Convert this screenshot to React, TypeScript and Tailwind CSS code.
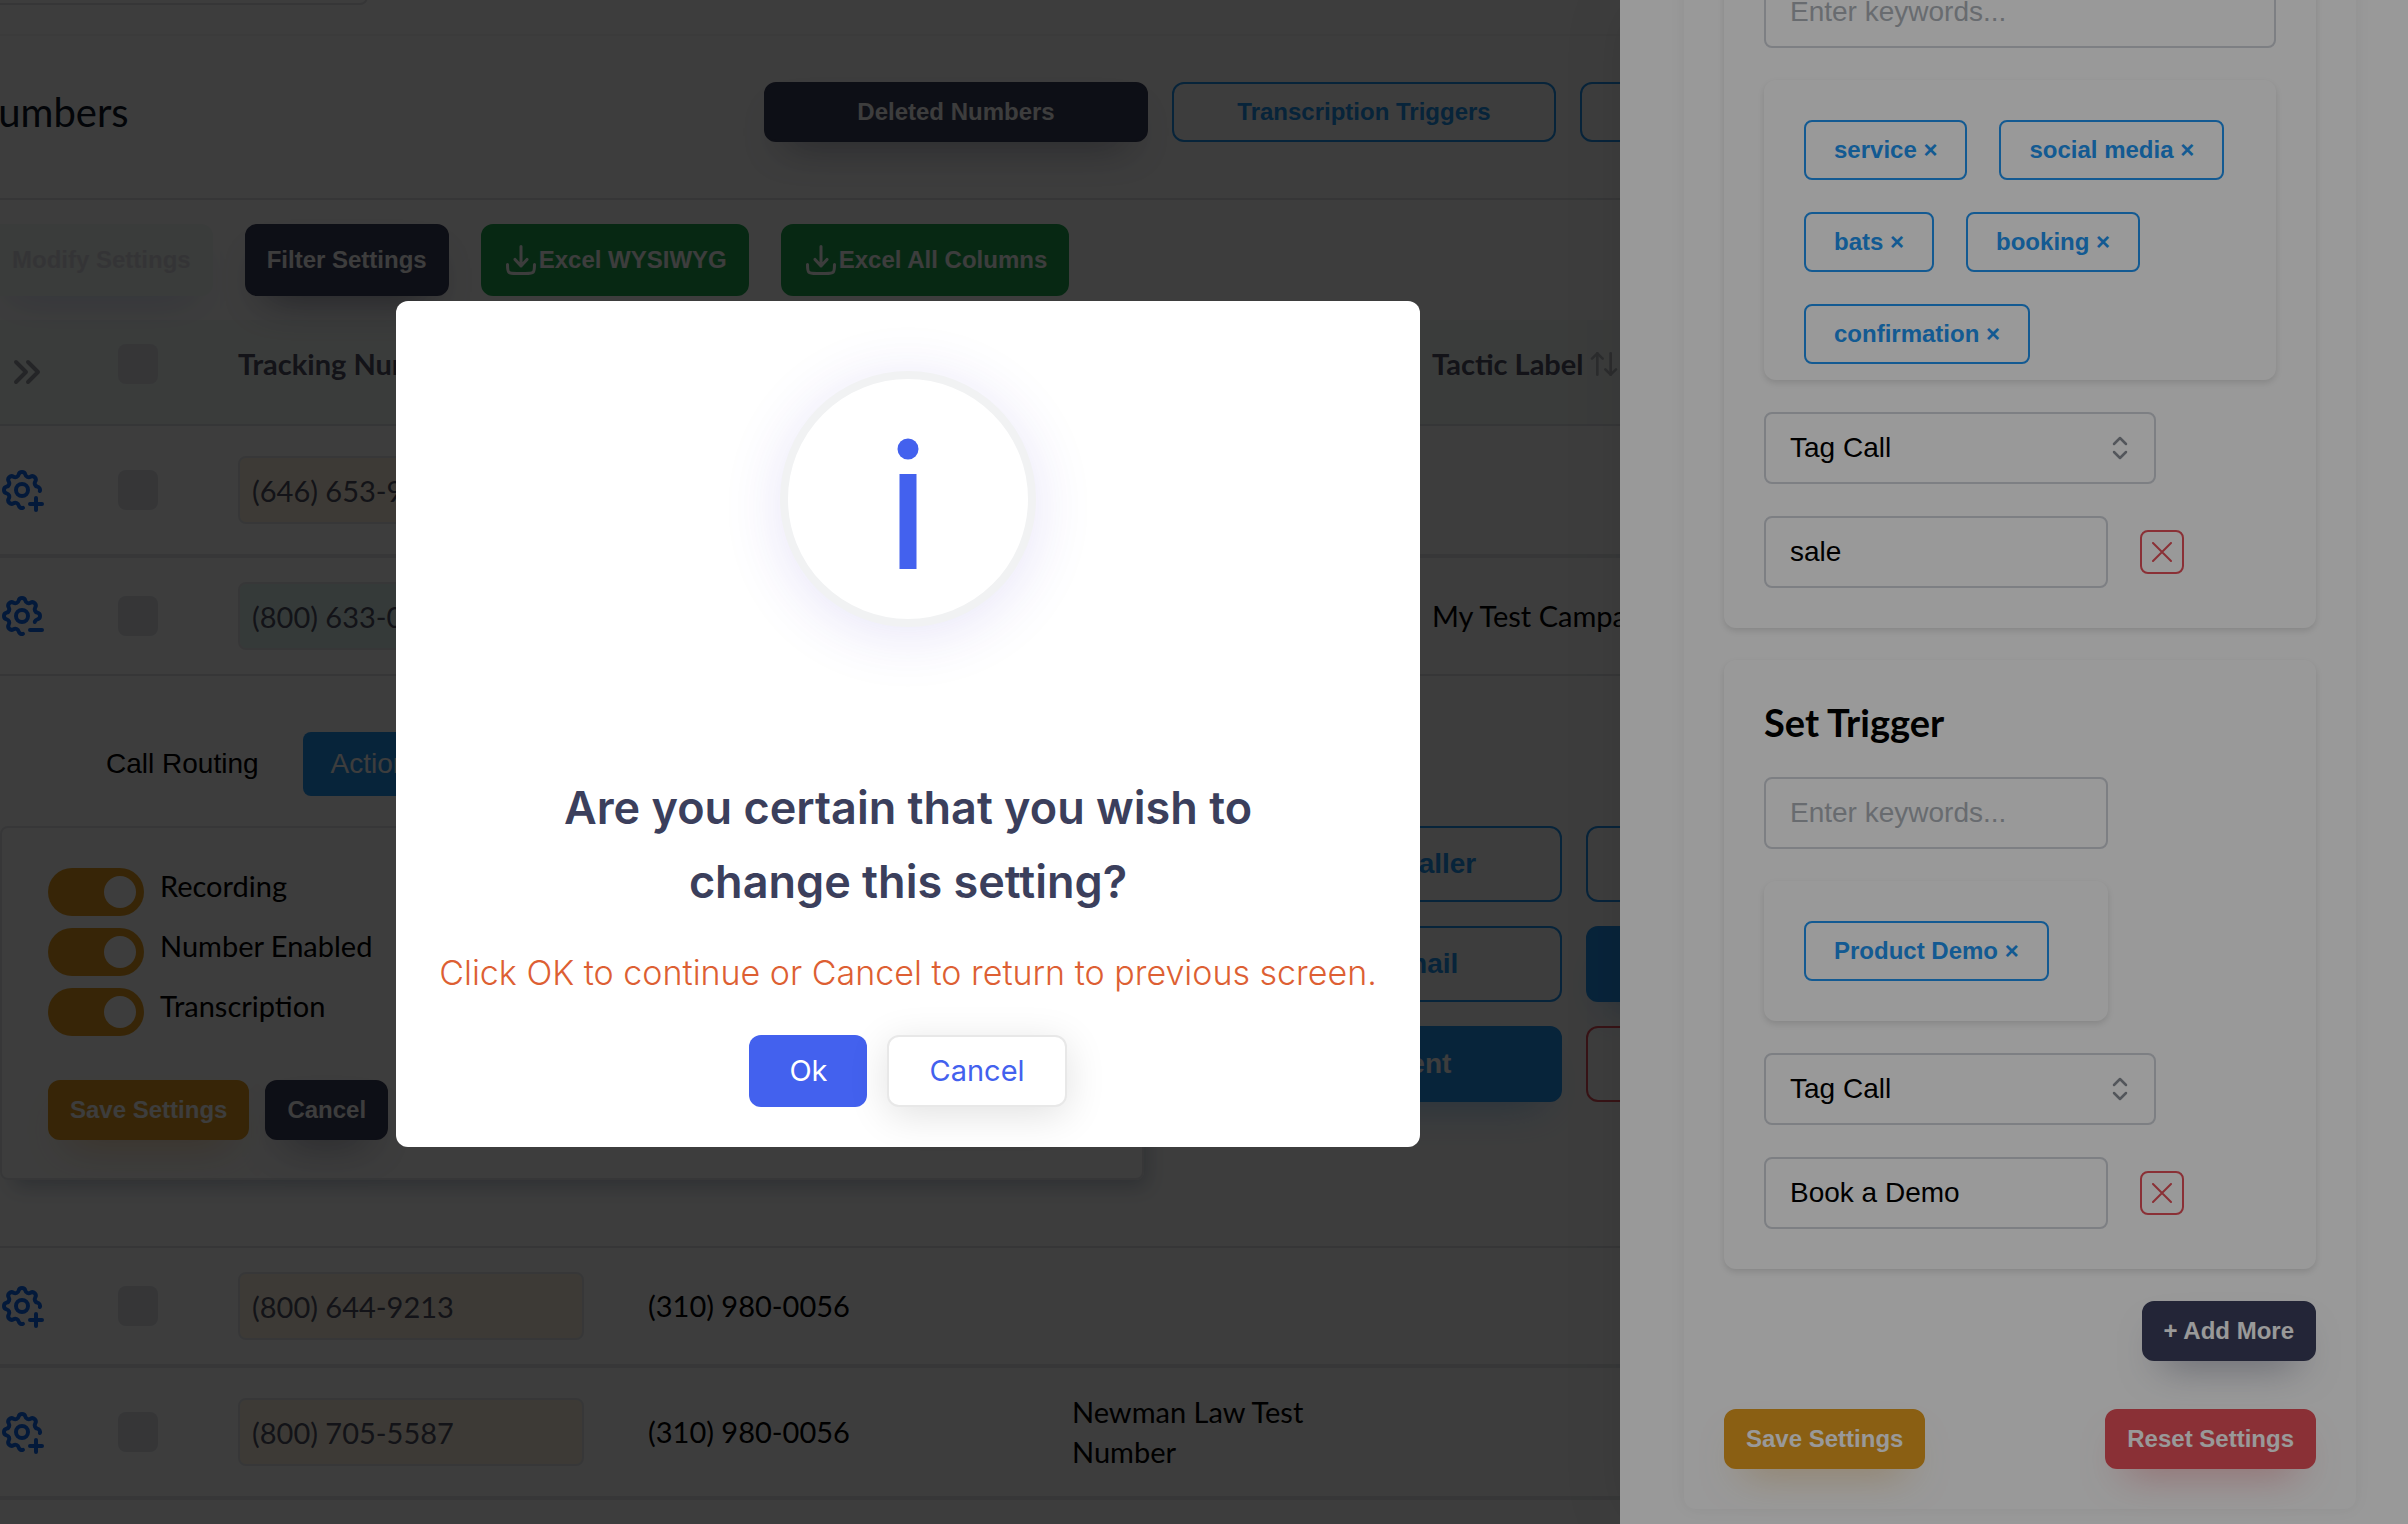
import type { ReactNode } from 'react';
import { TbSettingsMinus, TbSettingsPlus } from 'react-icons/tb';
import { ArrowUpDown } from 'lucide-react';

type TrackingRow = {
  id: string;
  number: string;
  forwardTo?: string;
  label?: string;
  tactic?: string;
  open?: boolean;
};

const rows: TrackingRow[] = [
  { id: 'r1', number: '(646) 653-9120', label: 'Main Office Test Number' },
  { id: 'r2', number: '(800) 633-0187', tactic: 'My Test Campaign', open: true },
  { id: 'r3', number: '(800) 644-9213', forwardTo: '(310) 980-0056' },
  { id: 'r4', number: '(800) 705-5587', forwardTo: '(310) 980-0056', label: 'Newman Law Test Number' },
];

const toggles = ['Recording', 'Number Enabled', 'Transcription'];

const fieldClass =
  'h-[72px] rounded-lg border-2 border-[#d0d4db] bg-white px-6 text-[28px] text-black placeholder:text-[#aeb3ba]';

// Buttons
const tones = {
  dark: 'border-[#3b3f5c] bg-[#3b3f5c] text-white shadow-[0_20px_40px_-20px_rgba(59,63,92,0.7)]',
  warning: 'border-[#e69e20] bg-[#e69e20] text-white shadow-[0_20px_40px_-20px_rgba(226,160,63,0.7)]',
  danger: 'border-[#e7515a] bg-[#e7515a] text-white shadow-[0_20px_40px_-20px_rgba(231,81,90,0.7)]',
  success: 'border-[#21ab53] bg-[#21ab53] text-white',
  outline: 'border-[#2196f3] bg-transparent text-[#2196f3]',
};

function Button({ tone, className = 'h-[60px]', children }: { tone: keyof typeof tones; className?: string; children: ReactNode }) {
  return (
    <button
      type="button"
      className={`flex items-center justify-center rounded-xl border-2 px-5 text-2xl font-bold whitespace-nowrap ${tones[tone]} ${className}`}
    >
      {children}
    </button>
  );
}

function DownloadIcon() {
  return (
    <svg className="size-9" viewBox="0 0 24 24" fill="none" stroke="currentColor" strokeWidth="2" strokeLinecap="round" strokeLinejoin="round">
      <path d="M12 3v13m0 0 4-4.375M12 16l-4-4.375" />
      <path d="M3 15c0 2.828 0 4.243.879 5.121C4.757 21 6.172 21 9 21h6c2.828 0 4.243 0 5.121-.879C21 19.243 21 17.828 21 15" />
    </svg>
  );
}

function CheckBox({ label }: { label: string }) {
  return <input type="checkbox" aria-label={label} className="block size-10 appearance-none rounded-lg bg-[#e0e3e9]" />;
}

function ActionButton({ kind, children }: { kind: 'outline' | 'solid' | 'danger'; children: ReactNode }) {
  const styles = {
    outline: 'border-[#2196f3] text-[#2196f3]',
    solid: 'border-[#2196f3] bg-[#2196f3] text-white shadow-[0_20px_40px_-20px_rgba(33,150,243,0.5)]',
    danger: 'border-[#e7515a] text-[#e7515a]',
  };
  return (
    <button type="button" className={`h-[76px] rounded-xl border-2 text-[28px] font-bold ${styles[kind]}`}>
      {children}
    </button>
  );
}

// Expanded settings of one tracking number
function RowSettings() {
  return (
    <div className="pt-14 pb-[66px] pl-8">
      <div role="tablist" className="mb-[30px] flex gap-4 pl-[78px] font-['Liberation_Sans',Arial,sans-serif] text-[28px]">
        <button type="button" role="tab" className="h-16 rounded-lg px-7 text-black">Call Routing</button>
        <button type="button" role="tab" aria-selected="true" className="h-16 rounded-lg bg-[#2196f3] px-7 text-white">Actions</button>
      </div>
      <div className="flex gap-6">
        <div className="w-[1144px] rounded-lg border-2 border-[#e6e8ec] px-[46px] pt-10 pb-[38px] shadow-[8px_12px_20px_-6px_#bfc9d4]">
          <div className="flex flex-col gap-3">
            {toggles.map((name) => (
              <label key={name} className="flex h-12 items-start gap-4 text-[29px] leading-9 text-black">
                <input
                  type="checkbox"
                  role="switch"
                  defaultChecked
                  className="flex h-12 w-24 appearance-none justify-end rounded-full bg-[#e69e20] p-2 before:size-8 before:rounded-full before:bg-white"
                />
                {name}
              </label>
            ))}
          </div>
          <div className="mt-11 flex gap-4 font-['Liberation_Sans',Arial,sans-serif]">
            <Button tone="warning">Save Settings</Button>
            <Button tone="dark">Cancel</Button>
          </div>
        </div>
        <div className="grid grow auto-rows-min grid-cols-[394px_394px] gap-6 font-['Liberation_Sans',Arial,sans-serif]">
          <ActionButton kind="outline">Announce Caller</ActionButton>
          <ActionButton kind="outline">Call Recording</ActionButton>
          <ActionButton kind="outline">Custom Email</ActionButton>
          <ActionButton kind="solid">Triggers</ActionButton>
          <ActionButton kind="solid">Appointment</ActionButton>
          <ActionButton kind="danger">Delete Number</ActionButton>
        </div>
      </div>
    </div>
  );
}

function NumberRow({ row }: { row: TrackingRow }) {
  const cell = `px-4 py-6 ${row.open ? 'border-b-2 border-[#e0e3e7]' : 'border-b-4 border-[#e6e8eb]'}`;
  const GearIcon = row.open ? TbSettingsMinus : TbSettingsPlus;
  return (
    <>
      <tr>
        <td className={`${cell} pl-[30px]`}>
          <button type="button" aria-label={`Settings for ${row.number}`} className="block text-[#0f6cf5]">
            <GearIcon className="size-12" />
          </button>
        </td>
        <td className={cell}>
          <CheckBox label={`Select ${row.number}`} />
        </td>
        <td className={cell}>
          <input
            aria-label="Tracking number"
            defaultValue={row.number}
            className={`block h-[68px] w-[346px] rounded-lg border-2 border-[#e6e8ec] px-3 text-[29px] text-[#515365] ${row.open ? 'bg-[#dff5f0]' : 'bg-[#fff6e0]'}`}
          />
        </td>
        <td className={cell}>{row.forwardTo}</td>
        <td className={cell}>
          <p className="max-w-64">{row.label}</p>
        </td>
        <td className={`${cell} whitespace-nowrap`}>{row.tactic}</td>
      </tr>
      {row.open && (
        <tr>
          <td colSpan={6} className="border-b-2 border-[#e0e3e7]">
            <RowSettings />
          </td>
        </tr>
      )}
    </>
  );
}

function NumbersPage() {
  return (
    <main className="-mt-[76px] -ml-8 w-[2600px] bg-white">
      <div className="flex h-28 items-center border-b-2 border-[#f8f8f8]">
        <input aria-label="Search" className="h-[52px] w-[400px] rounded-lg border-2 border-[#e0e3e7] px-4 text-2xl" />
      </div>
      <div className="flex items-center gap-6 border-b-2 border-[#e0e3e7] pt-[46px] pb-14">
        <h1 className="w-[772px] text-[40px] leading-[60px] text-[#0e1726]">Numbers</h1>
        <div className="flex gap-6 font-['Liberation_Sans',Arial,sans-serif]">
          <Button tone="dark" className="h-[60px] w-96">Deleted Numbers</Button>
          <Button tone="outline" className="h-[60px] w-96">Transcription Triggers</Button>
          <Button tone="outline" className="h-[60px] w-96">Number Pools</Button>
        </div>
      </div>

      {/* Toolbar */}
      <div className="flex gap-8 py-6 pl-[22px] font-['Liberation_Sans',Arial,sans-serif]">
        <button
          type="button"
          disabled
          className="h-[72px] rounded-xl bg-[#f3f9f7] px-[22px] text-2xl font-bold whitespace-nowrap text-[#dcdce0] shadow-[0_20px_40px_-20px_#cdd6f0]"
        >
          Modify Settings
        </button>
        <Button tone="dark" className="h-[72px]">Filter Settings</Button>
        <Button tone="success" className="h-[72px]"><DownloadIcon />Excel WYSIWYG</Button>
        <Button tone="success" className="h-[72px]"><DownloadIcon />Excel All Columns</Button>
      </div>

      <table className="w-full table-fixed border-separate border-spacing-0 text-left text-[29px] leading-10 text-black">
        <colgroup>
          <col className="w-[134px]" />
          <col className="w-[120px]" />
          <col className="w-[410px]" />
          <col className="w-[424px]" />
          <col className="w-[360px]" />
          <col />
        </colgroup>
        <thead>
          <tr className="bg-[#f5faf8] align-top whitespace-nowrap text-[#515365] [&>th]:h-[106px] [&>th]:border-b-2 [&>th]:border-[#dfe2e5] [&>th]:px-4 [&>th]:py-6">
            <th>
              <button type="button" aria-label="Expand all" className="mt-2.5 ml-7 block text-[#9a9fa5]">
                <svg className="h-9 w-8" viewBox="0 0 32 36" fill="none" stroke="currentColor" strokeWidth="4" strokeLinecap="round" strokeLinejoin="round">
                  <path d="M4 8l10 10L4 28M16 8l10 10-10 10" />
                </svg>
              </button>
            </th>
            <th><CheckBox label="Select all" /></th>
            <th>Tracking Number</th>
            <th>Forward To</th>
            <th>Number Label</th>
            <th>
              <span className="flex items-center gap-1">
                Tactic Label
                <ArrowUpDown className="size-8 text-[#b5b9bf]" />
              </span>
            </th>
          </tr>
        </thead>
        <tbody>
          {rows.map((row) => (
            <NumberRow key={row.id} row={row} />
          ))}
        </tbody>
      </table>
    </main>
  );
}

// Drawer with the transcription triggers
type Trigger = { id: string; keywords: string[]; wide?: boolean; value: string };

const triggers: Trigger[] = [
  { id: 't1', keywords: ['service', 'social media', 'bats', 'booking', 'confirmation'], wide: true, value: 'sale' },
  { id: 't2', keywords: ['Product Demo'], value: 'Book a Demo' },
];

function TriggerCard({ trigger }: { trigger: Trigger }) {
  const width = trigger.wide ? 'w-[512px]' : 'w-[344px]';
  return (
    <section className="flex flex-col items-start gap-8 rounded-xl p-10 shadow-[0_3px_6px_rgba(0,0,0,0.12)]">
      <h2 className="font-[Lato,'Open_Sans',sans-serif] text-[38px] leading-[45px] font-bold text-black">Set Trigger</h2>
      <input aria-label="Keywords" placeholder="Enter keywords..." className={`${fieldClass} ${width}`} />
      <div className={`flex flex-wrap gap-8 rounded-xl pt-10 pl-10 shadow-[0_3px_6px_rgba(0,0,0,0.12)] ${trigger.wide ? 'pb-4' : 'pb-10'} ${width}`}>
        {trigger.keywords.map((word) => (
          <button
            key={word}
            type="button"
            className="h-[60px] rounded-lg border-2 border-[#2196f3] px-7 text-2xl font-bold whitespace-nowrap text-[#2196f3]"
          >
            {word} ×
          </button>
        ))}
      </div>
      <div className="relative w-[392px]">
        <select aria-label="Action" className={`${fieldClass} w-full appearance-none`}>
          <option>Tag Call</option>
        </select>
        <svg
          className="pointer-events-none absolute top-6 right-7 h-6 w-4 text-[#8a8f98]"
          viewBox="0 0 16 24"
          fill="none"
          stroke="currentColor"
          strokeWidth="2.5"
          strokeLinecap="round"
          strokeLinejoin="round"
        >
          <path d="M2 8l6-6 6 6M2 16l6 6 6-6" />
        </svg>
      </div>
      <div className="flex items-center gap-8">
        <input aria-label="Tag" defaultValue={trigger.value} className={`${fieldClass} w-[344px]`} />
        <button type="button" aria-label="Remove trigger" className="flex size-11 items-center justify-center rounded-lg border-2 border-[#e7515a] text-[#e7515a]">
          <svg className="size-5" viewBox="0 0 20 20" fill="none" stroke="currentColor" strokeWidth="2" strokeLinecap="round">
            <path d="M1 1l18 18M19 1L1 19" />
          </svg>
        </button>
      </div>
    </section>
  );
}

function TriggersDrawer() {
  return (
    <aside className="absolute inset-y-0 right-0 flex w-[788px] flex-col justify-end overflow-hidden bg-white pr-[52px] pb-[15px] pl-16 font-['Liberation_Sans',Arial,sans-serif] shadow-[0_0_60px_rgba(0,0,0,0.08)]">
      <div className="flex flex-col gap-8 rounded-xl p-10 shadow-[0_0_16px_rgba(0,0,0,0.06)]">
        {triggers.map((trigger) => (
          <TriggerCard key={trigger.id} trigger={trigger} />
        ))}
        <div className="flex justify-end">
          <Button tone="dark">+ Add More</Button>
        </div>
        <div className="mt-4 flex justify-between">
          <Button tone="warning">Save Settings</Button>
          <Button tone="danger">Reset Settings</Button>
        </div>
      </div>
    </aside>
  );
}

function ConfirmDialog() {
  return (
    <div className="absolute -top-[76px] right-0 bottom-0 -left-[592px] flex items-center justify-center bg-black/40">
      <div role="dialog" aria-modal="true" className="flex w-[1024px] flex-col items-center rounded-xl bg-white px-10 pt-[70px] pb-10 text-center font-[Inter,sans-serif]">
        <div className="flex size-64 items-center justify-center rounded-full border-8 border-[#f1f2f3] bg-white pt-2 shadow-[0_8px_60px_rgba(67,50,200,0.13)]">
          <svg className="h-[131px] w-6" viewBox="0 0 24 131" fill="#4361ee">
            <circle cx="12" cy="11" r="10.5" />
            <path d="M3.5 36h17v95h-17z" />
          </svg>
        </div>
        <h2 className="mt-36 w-[800px] text-[45px] leading-[74px] font-semibold text-[#3b3f5c]">
          Are you certain that you wish to change this setting?
        </h2>
        <p className="mt-6 text-[34px] leading-[60px] font-light whitespace-nowrap text-[#dd5f33]">
          Click OK to continue or Cancel to return to previous screen.
        </p>
        <div className="mt-8 flex gap-5 text-[29px]">
          <button type="button" className="h-[72px] rounded-xl bg-[#4361ee] px-10 text-white">Ok</button>
          <button type="button" className="h-[72px] rounded-xl border-2 border-[#e8e8e8] bg-white px-10 text-[#4361ee] shadow-[0_8px_40px_rgba(0,0,0,0.12)]">
            Cancel
          </button>
        </div>
      </div>
    </div>
  );
}

export default function App() {
  return (
    <div className="relative h-screen overflow-hidden bg-white font-[Lato,'Open_Sans',sans-serif]">
      <NumbersPage />
      <div className="absolute inset-0 bg-black/60" />
      <TriggersDrawer />
      <ConfirmDialog />
    </div>
  );
}
